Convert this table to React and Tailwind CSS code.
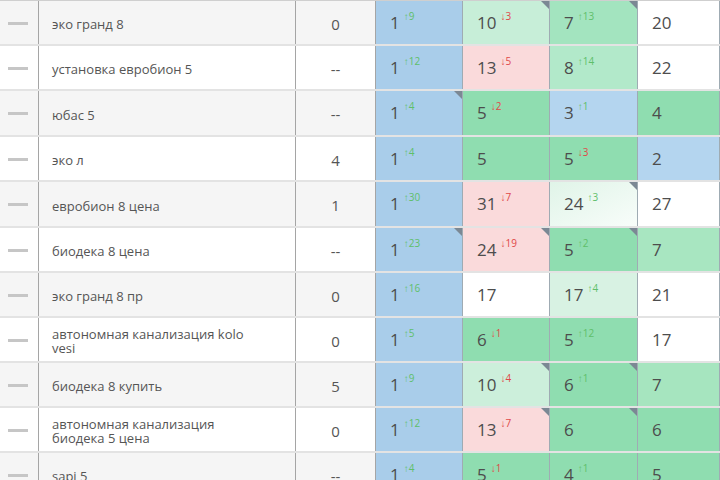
const BLUE = 'bg-[#a9cdea]';

const rows = [
  { h: 'h-[45px]', kw: 'эко гранд 8', v: '0', cells: [
    { n: '1', d: '9', up: true, bg: BLUE },
    { n: '10', d: '3', up: false, bg: 'bg-[#c7eed8]', tri: true },
    { n: '7', d: '13', up: true, bg: 'bg-[#a3e4bf]', tri: true },
    { n: '20', bg: 'bg-white' },
  ] },
  { h: 'h-[45px]', kw: 'установка евробион 5', v: '--', cells: [
    { n: '1', d: '12', up: true, bg: BLUE },
    { n: '13', d: '5', up: false, bg: 'bg-[#fadadb]' },
    { n: '8', d: '14', up: true, bg: 'bg-[#b2e9ca]' },
    { n: '22', bg: 'bg-white' },
  ] },
  { h: 'h-[46px]', kw: 'юбас 5', v: '--', cells: [
    { n: '1', d: '4', up: true, bg: BLUE, tri: true },
    { n: '5', d: '2', up: false, bg: 'bg-[#8fddb0]' },
    { n: '3', d: '1', up: true, bg: 'bg-[#b4d5ef]' },
    { n: '4', bg: 'bg-[#8fddb0]' },
  ] },
  { h: 'h-[45px]', kw: 'эко л', v: '4', cells: [
    { n: '1', d: '4', up: true, bg: BLUE },
    { n: '5', bg: 'bg-[#8fddb0]' },
    { n: '5', d: '3', up: false, bg: 'bg-[#8fddb0]' },
    { n: '2', bg: 'bg-[#b4d5ef]' },
  ] },
  { h: 'h-[46px]', kw: 'евробион 8 цена', v: '1', cells: [
    { n: '1', d: '30', up: true, bg: BLUE },
    { n: '31', d: '7', up: false, bg: 'bg-[#fadadb]' },
    { n: '24', d: '3', up: true, bg: 'bg-linear-to-br from-[#e0f4e8] to-[#f8fdfa]', tri: true },
    { n: '27', bg: 'bg-white' },
  ] },
  { h: 'h-[45px]', kw: 'биодека 8 цена', v: '--', cells: [
    { n: '1', d: '23', up: true, bg: BLUE, tri: true },
    { n: '24', d: '19', up: false, bg: 'bg-[#fadadb]', tri: true },
    { n: '5', d: '2', up: true, bg: 'bg-[#8fddb0]', tri: true },
    { n: '7', bg: 'bg-[#a8e6c1]' },
  ] },
  { h: 'h-[45px]', kw: 'эко гранд 8 пр', v: '0', cells: [
    { n: '1', d: '16', up: true, bg: BLUE },
    { n: '17', bg: 'bg-white' },
    { n: '17', d: '4', up: true, bg: 'bg-[#d8f2e3]' },
    { n: '21', bg: 'bg-white' },
  ] },
  { h: 'h-[45px]', kw: 'автономная канализация kolo vesi', v: '0', cells: [
    { n: '1', d: '5', up: true, bg: BLUE },
    { n: '6', d: '1', up: false, bg: 'bg-[#8fddb0]' },
    { n: '5', d: '12', up: true, bg: 'bg-[#8fddb0]' },
    { n: '17', bg: 'bg-white' },
  ] },
  { h: 'h-[45px]', kw: 'биодека 8 купить', v: '5', cells: [
    { n: '1', d: '9', up: true, bg: BLUE },
    { n: '10', d: '4', up: false, bg: 'bg-[#ccefdb]', tri: true },
    { n: '6', d: '1', up: true, bg: 'bg-[#8fddb0]', tri: true },
    { n: '7', bg: 'bg-[#a6e5bf]' },
  ] },
  { h: 'h-[45px]', kw: 'автономная канализация биодека 5 цена', v: '0', cells: [
    { n: '1', d: '12', up: true, bg: BLUE },
    { n: '13', d: '7', up: false, bg: 'bg-[#fadadb]', tri: true },
    { n: '6', bg: 'bg-[#8fddb0]', tri: true },
    { n: '6', bg: 'bg-[#8fddb0]' },
  ] },
  { h: 'h-[45px]', kw: 'sapi 5', v: '--', cells: [
    { n: '1', d: '4', up: true, bg: BLUE },
    { n: '5', d: '1', up: false, bg: 'bg-[#8fddb0]' },
    { n: '4', d: '1', up: true, bg: 'bg-[#8fddb0]' },
    { n: '5', bg: 'bg-[#8fddb0]' },
  ] },
];

const widths = ['w-[87px]', 'w-[87px]', 'w-[88px]', 'flex-1'];

function PosCell({ cell, width }) {
  return (
    <div className={`relative ${width} ${cell.bg} border-r border-[#9fabb3] pl-[14px] pt-[9px]`}>
      <span className="text-[17px] text-[#4d4d4d]">{cell.n}</span>
      {cell.d && (
        <span className={`relative -top-[9px] ml-[4px] text-[10px] ${cell.up ? 'text-[#5fbf6a]' : 'text-[#e04848]'}`}>
          {cell.up ? '↑' : '↓'}{cell.d}
        </span>
      )}
      {cell.tri && (
        <div className="absolute top-0 right-0 w-0 h-0 border-l-[8px] border-l-transparent border-t-[8px] border-t-[#7b8894]" />
      )}
    </div>
  );
}

export default function App() {
  return (
    <div className="w-[720px] h-[480px] overflow-hidden bg-white border-t border-[#cfcfcf] font-['Open_Sans',sans-serif]">
      {rows.map((r, i) => (
        <div
          key={i}
          className={`flex ${r.h} border-b-2 border-[#e3e3e3] ${i % 2 === 0 ? 'bg-[#f5f5f5]' : 'bg-white'}`}
        >
          <div className="w-[39px] shrink-0 border-r border-[#a5a5a5] flex items-center pl-[8px]">
            <div className="w-[20px] h-[3px] bg-[#c6c6c6] mt-[1px]" />
          </div>
          <div className="w-[257px] shrink-0 border-r border-[#a5a5a5] flex items-center pl-[13px] pr-[40px] pt-[3px]">
            <span className="text-[13px] leading-[14px] text-[#555]">{r.kw}</span>
          </div>
          <div className="w-[80px] shrink-0 border-r border-[#a5a5a5] flex items-center justify-center pt-[3px]">
            <span className="text-[15px] text-[#555]">{r.v}</span>
          </div>
          {r.cells.map((c, j) => (
            <PosCell key={j} cell={c} width={widths[j]} />
          ))}
        </div>
      ))}
    </div>
  );
}
